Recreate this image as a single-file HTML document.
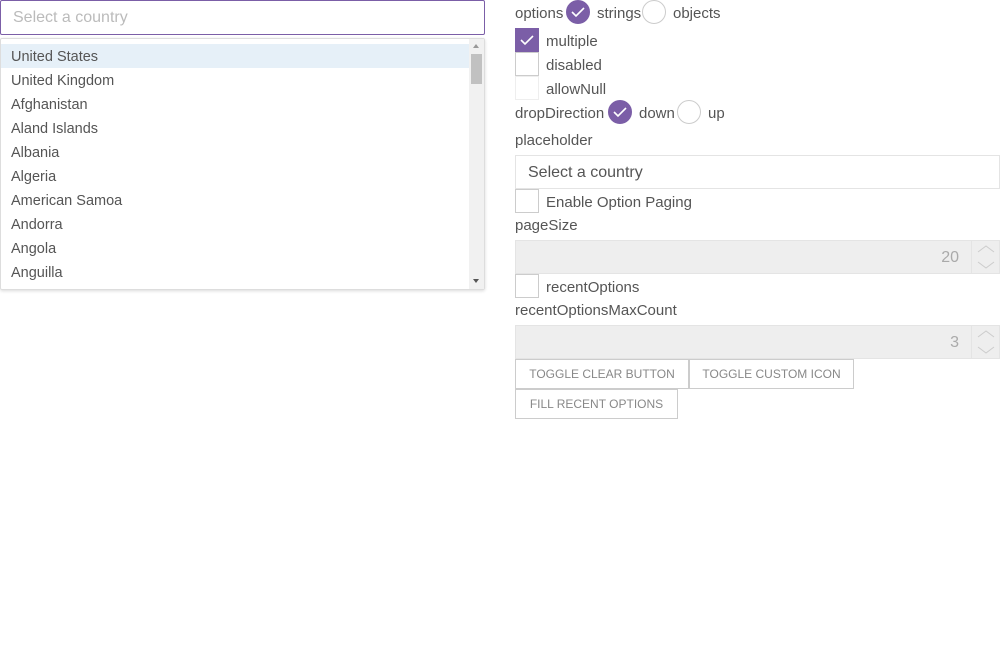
<!DOCTYPE html>
<html><head><meta charset="utf-8"><style>
*{box-sizing:border-box;margin:0;padding:0}
body{width:1000px;height:660px;background:#fff;font-family:"Liberation Sans",sans-serif;color:#555;font-size:14px;position:relative;overflow:hidden}
.a{position:absolute;white-space:nowrap}
.cb{position:absolute;width:24px;height:24px;border:1px solid #ccc;background:#fff}
.cb.on{background:#7b5ea7;border-color:#7b5ea7}
.rd{position:absolute;width:24px;height:24px;border-radius:50%;border:1px solid #ccc;background:#fff}
.rd.on{background:#7b5ea7;border-color:#7b5ea7}
svg.ck{position:absolute;left:4px;top:5px}
.li{position:absolute;left:1px;width:468px;height:24px;line-height:26px;padding-left:10px;font-size:14.5px;color:#555}
.num{position:absolute;left:515px;width:485px;height:34px;background:#eee;border:1px solid #e4e4e4}
.num span{position:absolute;right:40px;top:8px;font-size:16px;color:#aaa}
.num .sp{position:absolute;right:0;top:0;width:28px;height:32px;border-left:1px solid #e4e4e4}
.btn{position:absolute;height:30px;border:1px solid #ccc;font-size:12px;color:#888;line-height:29px;text-align:center;background:#fff}
</style></head><body>
<div class="a" style="left:0;top:0;width:485px;height:35px;border:1px solid #7b5ea7;border-radius:2px"></div>
<div class="a" style="left:13px;top:9px;font-size:16px;color:#bbb">Select a country</div>
<div class="a" style="left:0;top:38px;width:485px;height:252px;border:1px solid #ddd;border-radius:2px;box-shadow:0 1px 3px rgba(0,0,0,.15)"></div>
<div class="a" style="left:1px;top:44px;width:468px;height:24px;background:#e6f0f8"></div>
<div class="li" style="top:44px">United States</div>
<div class="li" style="top:68px">United Kingdom</div>
<div class="li" style="top:92px">Afghanistan</div>
<div class="li" style="top:116px">Aland Islands</div>
<div class="li" style="top:140px">Albania</div>
<div class="li" style="top:164px">Algeria</div>
<div class="li" style="top:188px">American Samoa</div>
<div class="li" style="top:212px">Andorra</div>
<div class="li" style="top:236px">Angola</div>
<div class="li" style="top:260px">Anguilla</div>
<div class="a" style="left:469px;top:39px;width:15px;height:250px;background:#f1f1f1"></div>
<div class="a" style="left:471px;top:54px;width:11px;height:30px;background:#c1c1c1"></div>
<div class="a" style="left:473px;top:44px;border:3px solid transparent;border-bottom:4px solid #999;border-top:0"></div>
<div class="a" style="left:473px;top:279px;border:3px solid transparent;border-top:4px solid #555;border-bottom:0"></div>

<div class="a" style="left:515px;top:5px;font-size:15px">options</div>
<div class="rd on" style="left:566px;top:0"><svg class="ck" width="14" height="12"><path d="M1 6l4 4 8-8" stroke="#fff" stroke-width="1.6" fill="none"/></svg></div>
<div class="a" style="left:597px;top:5px;font-size:15px">strings</div>
<div class="rd" style="left:642px;top:0"></div>
<div class="a" style="left:673px;top:5px;font-size:15px">objects</div>

<div class="cb on" style="left:515px;top:28px"><svg class="ck" width="14" height="12"><path d="M1 6l4 4 8-8" stroke="#fff" stroke-width="1.6" fill="none"/></svg></div>
<div class="a" style="left:546px;top:33px;font-size:15px">multiple</div>
<div class="cb" style="left:515px;top:52px"></div>
<div class="a" style="left:546px;top:57px;font-size:15px">disabled</div>
<div class="cb" style="left:515px;top:76px;border-color:#eee"></div>
<div class="a" style="left:546px;top:81px;font-size:15px">allowNull</div>

<div class="a" style="left:515px;top:105px;font-size:15px">dropDirection</div>
<div class="rd on" style="left:608px;top:100px"><svg class="ck" width="14" height="12"><path d="M1 6l4 4 8-8" stroke="#fff" stroke-width="1.6" fill="none"/></svg></div>
<div class="a" style="left:639px;top:105px;font-size:15px">down</div>
<div class="rd" style="left:677px;top:100px"></div>
<div class="a" style="left:708px;top:105px;font-size:15px">up</div>

<div class="a" style="left:515px;top:132px;font-size:15px">placeholder</div>
<div class="a" style="left:515px;top:155px;width:485px;height:34px;border:1px solid #e4e4e4"></div>
<div class="a" style="left:528px;top:164px;font-size:16px;color:#555">Select a country</div>
<div class="cb" style="left:515px;top:189px"></div>
<div class="a" style="left:546px;top:194px;font-size:15px">Enable Option Paging</div>
<div class="a" style="left:515px;top:217px;font-size:15px">pageSize</div>
<div class="num" style="top:240px"><span>20</span><div class="sp"><svg width="28" height="32"><path d="M6 11l8-6 8 6M6 21l8 6 8-6" stroke="#ccc" fill="none"/></svg></div></div>
<div class="cb" style="left:515px;top:274px"></div>
<div class="a" style="left:546px;top:279px;font-size:15px">recentOptions</div>
<div class="a" style="left:515px;top:302px;font-size:15px">recentOptionsMaxCount</div>
<div class="num" style="top:325px"><span>3</span><div class="sp"><svg width="28" height="32"><path d="M6 11l8-6 8 6M6 21l8 6 8-6" stroke="#ccc" fill="none"/></svg></div></div>
<div class="btn" style="left:515px;top:359px;width:174px">TOGGLE CLEAR BUTTON</div>
<div class="btn" style="left:689px;top:359px;width:165px">TOGGLE CUSTOM ICON</div>
<div class="btn" style="left:515px;top:389px;width:163px">FILL RECENT OPTIONS</div>
</body></html>
